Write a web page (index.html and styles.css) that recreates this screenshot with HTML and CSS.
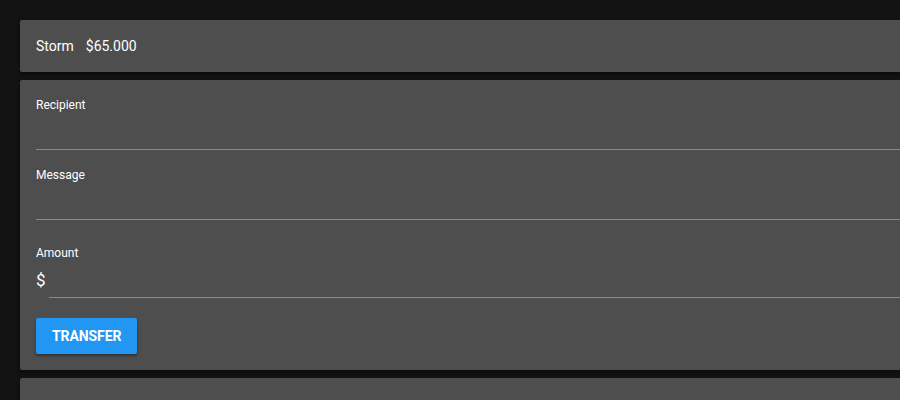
FILE: index.html
```html
<!DOCTYPE html>
<html>
<head>
<meta charset="utf-8">
<link rel="stylesheet" href="styles.css">
</head>
<body>
<div class="page">
  <div class="card account">
    <span class="name">Storm</span>
    <span class="balance">$65.000</span>
  </div>
  <div class="card form">
    <div class="field">
      <div class="label">Recipient</div>
      <div class="input"></div>
    </div>
    <div class="field">
      <div class="label">Message</div>
      <div class="input"></div>
    </div>
    <div class="field amount">
      <div class="label">Amount</div>
      <div class="row">
        <span class="prefix">$</span>
        <div class="input"></div>
      </div>
    </div>
    <button class="btn">Transfer</button>
  </div>
  <div class="card empty"></div>
</div>
</body>
</html>
```
FILE: styles.css
```css
html, body {
  margin: 0;
  padding: 0;
  background: #121212;
  overflow: hidden;
  height: 400px;
}
body {
  font-family: Roboto, "Liberation Sans", sans-serif;
  color: #ffffff;
}
.page {
  padding: 20px 0 0 20px;
  width: 1000px;
  display: flex;
  flex-direction: column;
  gap: 8px;
}
.card {
  background: #4e4e4e;
  border-radius: 2px;
  box-shadow: 0 2px 3px rgba(0,0,0,0.35);
}
.account {
  height: 52px;
  padding: 0 16px;
  display: flex;
  align-items: center;
  gap: 12px;
  font-size: 14px;
}
.form {
  padding: 17px 16px 16px;
  display: flex;
  flex-direction: column;
  align-items: flex-start;
}
.field {
  width: 100%;
  margin-bottom: 17px;
}
.label {
  font-size: 12px;
  line-height: 16px;
  color: #ffffff;
}
.input {
  height: 36px;
  border-bottom: 1px solid #8a8a8a;
  flex: 1;
}
.amount {
  margin-top: 8px;
  margin-bottom: 20px;
}
.row {
  display: flex;
  align-items: flex-end;
}
.prefix {
  font-size: 17px;
  line-height: 20px;
  width: 13px;
  padding-bottom: 8px;
}
.btn {
  background: #2196f3;
  color: #ffffff;
  border: none;
  border-radius: 2px;
  height: 36px;
  padding: 0 16px;
  font-family: Roboto, "Liberation Sans", sans-serif;
  font-size: 14px;
  font-weight: 700;
  text-transform: uppercase;
  letter-spacing: -0.1px;
  box-shadow: 0 2px 3px rgba(0,0,0,0.35);
}
.empty {
  height: 60px;
}
```
